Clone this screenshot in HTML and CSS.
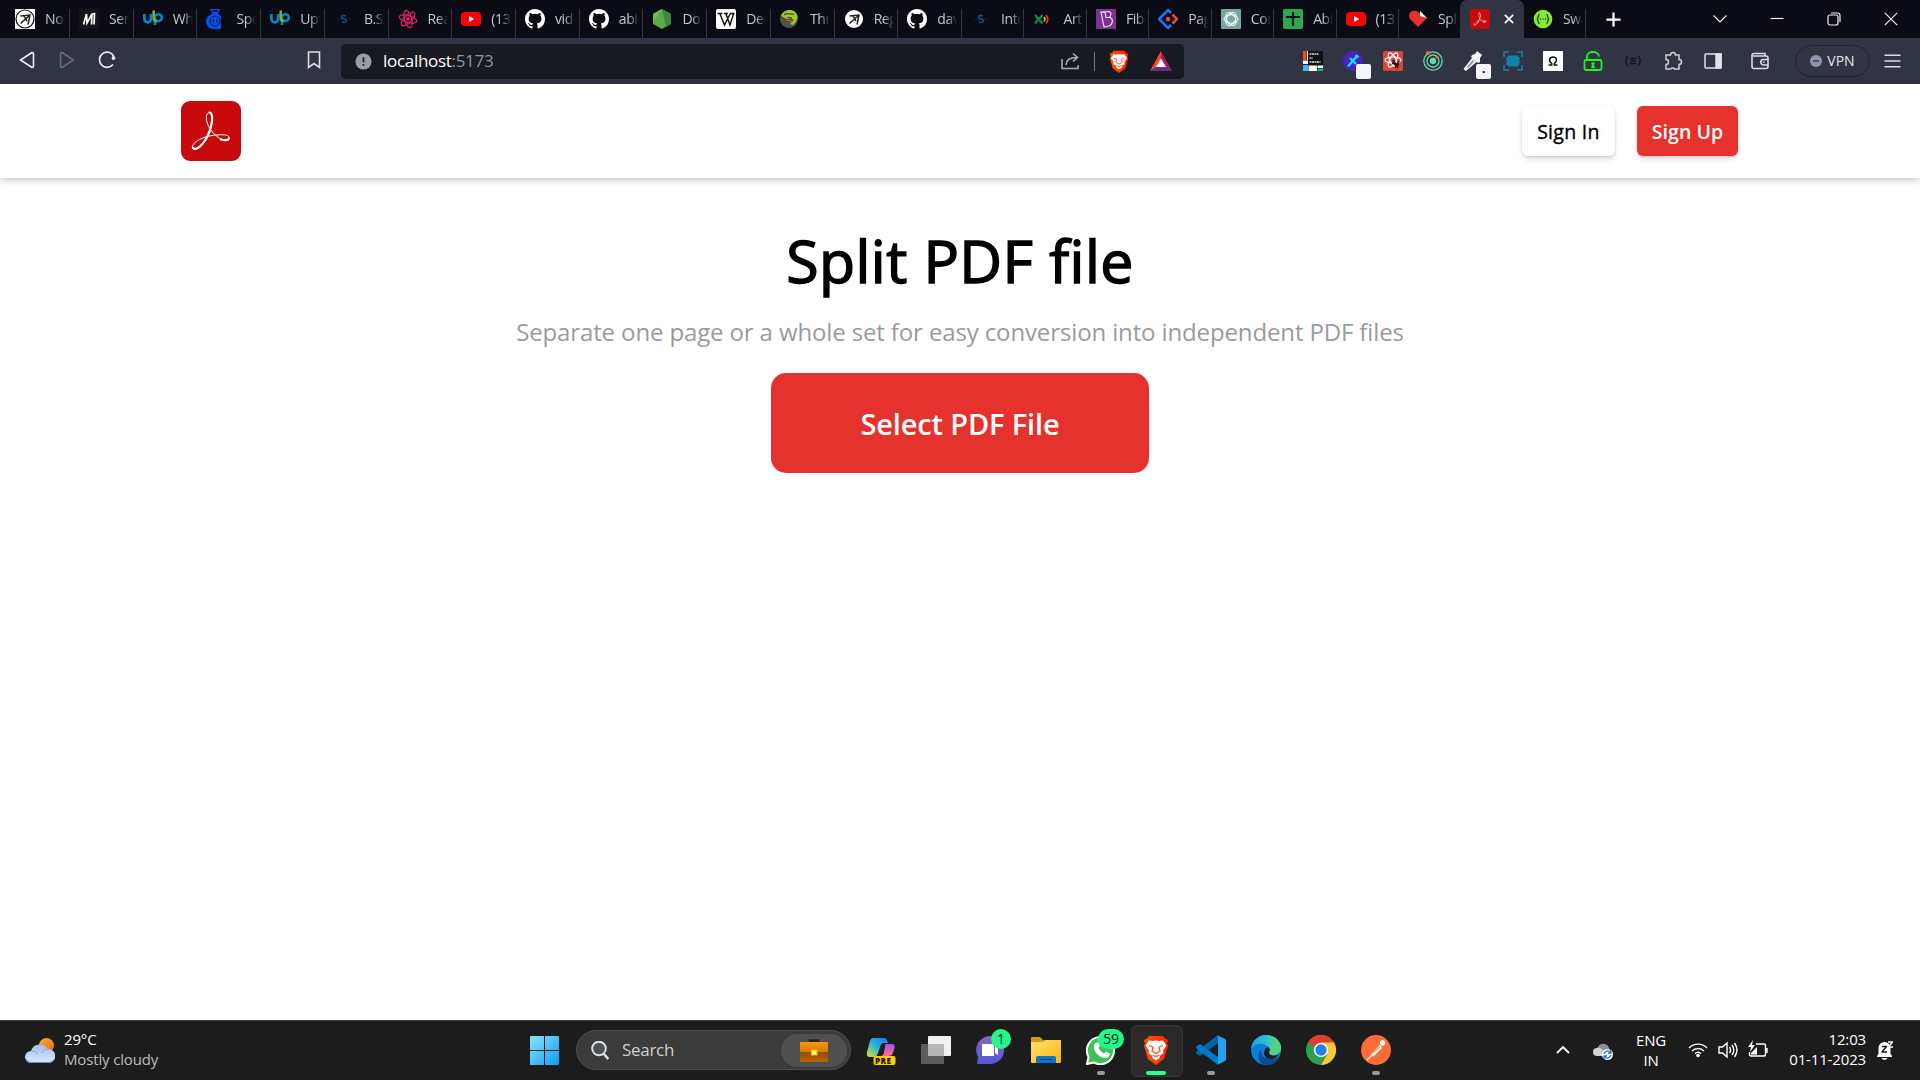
FILE: index.html
```html
<!DOCTYPE html>
<html lang="en">
<head>
<meta charset="utf-8">
<title>Split PDF file</title>
<link rel="stylesheet" href="styles.css">
</head>
<body>
<svg class="defs" aria-hidden="true">
  <defs>
    <linearGradient id="g-win" x1="0" y1="0" x2="1" y2="1"><stop offset="0" stop-color="#8be6ff"/><stop offset="1" stop-color="#0c9bf5"/></linearGradient>
    <linearGradient id="g-cloud" x1="0" y1="0" x2="0" y2="1"><stop offset="0" stop-color="#a4c0f0"/><stop offset="1" stop-color="#d9e9fc"/></linearGradient>
    <linearGradient id="g-sun" x1="0" y1="0" x2="1" y2="1"><stop offset="0" stop-color="#f9b52c"/><stop offset="1" stop-color="#ee5f12"/></linearGradient>
    <linearGradient id="g-case" x1="0" y1="0" x2="0" y2="1"><stop offset="0" stop-color="#f79a0c"/><stop offset=".48" stop-color="#d67a00"/><stop offset=".5" stop-color="#8f4c02"/><stop offset="1" stop-color="#b86400"/></linearGradient>
    <linearGradient id="g-cop1" x1="1" y1="0" x2="0" y2="1"><stop offset="0" stop-color="#1c6fe8"/><stop offset=".5" stop-color="#27b5df"/><stop offset="1" stop-color="#e9dc25"/></linearGradient>
    <linearGradient id="g-cop2" x1="0" y1="0" x2="0" y2="1"><stop offset="0" stop-color="#a84ff0"/><stop offset="1" stop-color="#ff6d86"/></linearGradient>
    <linearGradient id="g-chat" x1="0" y1="0" x2="0" y2="1"><stop offset="0" stop-color="#8a63b8"/><stop offset="1" stop-color="#5558d8"/></linearGradient>
    <linearGradient id="g-fold" x1="0" y1="0" x2="1" y2="1"><stop offset="0" stop-color="#ffdf76"/><stop offset="1" stop-color="#fcb90e"/></linearGradient>
    <linearGradient id="g-edge" x1="0" y1="0" x2="1" y2="0"><stop offset="0" stop-color="#249fe0"/><stop offset=".55" stop-color="#35c1cf"/><stop offset="1" stop-color="#68e04a"/></linearGradient>
    <linearGradient id="g-brave" x1="0" y1="0" x2="1" y2="0"><stop offset="0" stop-color="#ff5500"/><stop offset="1" stop-color="#ff2200"/></linearGradient>
  </defs>
  <symbol id="i-acrobat" viewBox="0 0 60 60"><rect width="60" height="60" rx="9" fill="#c80a0c"/><g fill="none" stroke="#fff" stroke-linecap="round" stroke-linejoin="round"><path stroke-width="1" d="M28.500 11.500c-4 0-4 7-1.500 12.500 2 5 6 9.500 11 13 4 2.500 9.500 2.500 10 0 .5-3-4-3.500-10-3.200-7 .3-14 1.700-19.500 4.700-5 2.500-8 6-7 8.500 1 2 4 1 6-1"/><path stroke-width="2.200" d="M28.500 11.500c3.500.5 3 8 1.500 14-2 8-6.500 16-11.500 20.500-2.500 2-5.500 2.500-6.500 1M40 38.500c4 1.200 7.500 1 8-1"/></g></symbol>
  <symbol id="i-github" viewBox="0 0 16 16"><path fill="#fff" d="M8 0C3.58 0 0 3.58 0 8c0 3.54 2.29 6.53 5.47 7.59.4.07.55-.17.55-.38v-1.49c-2.01.37-2.53-.49-2.69-.94-.09-.23-.48-.94-.82-1.13-.28-.15-.68-.52-.01-.53.63-.01 1.08.58 1.23.82.72 1.21 1.87.87 2.33.66.07-.52.28-.87.51-1.07-1.78-.2-3.64-.89-3.64-3.95 0-.87.31-1.59.82-2.15-.08-.2-.36-1.02.08-2.12 0 0 .67-.21 2.2.82a7.6 7.6 0 0 1 4 0c1.53-1.04 2.2-.82 2.2-.82.44 1.1.16 1.92.08 2.12.51.56.82 1.27.82 2.15 0 3.07-1.87 3.75-3.65 3.95.29.25.54.73.54 1.48v2.2c0 .21.15.46.55.38A8.01 8.01 0 0 0 16 8c0-4.42-3.58-8-8-8z"/></symbol>
  <symbol id="i-youtube" viewBox="0 0 20 20"><rect y="3" width="20" height="14" rx="4" fill="#f00"/><path d="M8 7l5.200 3-5.200 3z" fill="#fff"/></symbol>
  <symbol id="i-up" viewBox="0 0 20 20"><path d="M1.400 5v5a3.300 3.300 0 0 0 6.600 0V5" fill="none" stroke="#0a86c8" stroke-width="2.700"/><path d="M12 16V8.500a3.400 3.400 0 1 1 3 3.500h-2" fill="none" stroke="#0a86c8" stroke-width="2.600"/><path d="M10.700 1.500v7.500q.3 3 3.300 3" fill="none" stroke="#6bb345" stroke-width="2.600"/></symbol>
  <symbol id="i-dim" viewBox="0 0 20 20"><path d="M3 10h14" stroke="#15233f"/><path d="M12 7c-5-2-6 2-2 3s3 4-2 3" fill="none" stroke="#1e467c" stroke-width="1.600"/></symbol>
  <symbol id="i-expo" viewBox="0 0 20 20"><path d="M5.500 7l9.500-1-2 9.500M15 6l-9.500 8.500M9 7l3 5" fill="none" stroke="#222" stroke-width="1.500"/></symbol>
  <symbol id="i-brave" viewBox="0 0 26 30"><path fill="url(#g-brave)" d="M6 1h14l2 2.500L25 5l-1 4 1 2-4 13-8 6-8-6L1 11l1-2-1-4 3-1.500z"/><path fill="#fff" d="M6 5.500l4 .5 3-.5 3 .5 4-.5 3.500 5-3.500 5 .5 3-3 1.500-1 3-3.500 2.500L9.500 23l-1-3-3-1.500.5-3-3.500-5z"/><path fill="none" stroke="#ff4a10" stroke-width="1.200" d="M6 10.500l4 1.500-1 4 4 2.500 4-2.500-1-4 4-1.500M9.500 20.500h2M14.500 20.500h2M11.500 22l1.500-1 1.500 1"/></symbol>
</svg>

<header class="browser">
  <div class="tabs">
    <div class="tab first"><svg viewBox="0 0 20 20"><rect width="20" height="20" fill="#fff"/><circle cx="10" cy="10" r="9" fill="#fff" stroke="#111" stroke-width="1.200"/><use href="#i-expo"/></svg><span>Not</span></div>
    <div class="tab"><svg viewBox="0 0 20 20"><rect width="20" height="20" fill="#14141a"/><path d="M4.500 15.500l3-10.500.5 9L13 5l-.5 10.500M13 5l2.500-.500-.500 11" fill="none" stroke="#fff" stroke-width="1.700"/></svg><span>Sen</span></div>
    <div class="tab"><svg><use href="#i-up"/></svg><span>Wh</span></div>
    <div class="tab"><svg viewBox="0 0 20 20"><path d="M4 0h10l-1.500 3.500L12 5a8 8 0 0 1 3 2.500v12.500H9.500A7.500 7.500 0 0 1 6 5l.500-1.500H5.500z" fill="#0751f4"/><circle cx="9" cy="12" r="5" fill="none" stroke="#08113c"/><path d="M7.300 10.500v3M10.700 10.500v3M6 2h6" stroke="#08113c" stroke-width="1.300"/></svg><span>Spe</span></div>
    <div class="tab"><svg><use href="#i-up"/></svg><span>Upv</span></div>
    <div class="tab"><svg><use href="#i-dim"/></svg><span>B.S</span></div>
    <div class="tab"><svg viewBox="0 0 20 20" fill="none" stroke="#e0246c" stroke-width="1.200"><ellipse cx="10" cy="10" rx="9" ry="3.500" transform="rotate(15 10 10)"/><ellipse cx="10" cy="10" rx="9" ry="3.500" transform="rotate(75 10 10)"/><ellipse cx="10" cy="10" rx="9" ry="3.500" transform="rotate(135 10 10)"/><circle cx="10" cy="10" r="1.300" fill="#e0246c"/></svg><span>Rea</span></div>
    <div class="tab"><svg><use href="#i-youtube"/></svg><span>(13)</span></div>
    <div class="tab"><svg><use href="#i-github"/></svg><span>vide</span></div>
    <div class="tab"><svg><use href="#i-github"/></svg><span>abi</span></div>
    <div class="tab"><svg viewBox="0 0 20 20"><path d="M10 0l9 5v10l-9 5-9-5V5z" fill="#5aaa4c"/><path d="M10 0l9 5v10l-5 3z" fill="#3f873f"/><path d="M10 0L1 13V5z" fill="#77bb59"/></svg><span>Do</span></div>
    <div class="tab"><svg viewBox="0 0 20 20"><rect width="20" height="20" rx="2" fill="#fff"/><path d="M1.500 4.500h5M8 4.500h4M14 4.500h4.500M4 5l4.500 11L14 5M10 5l4 11 3.500-11" fill="none" stroke="#111" stroke-width="1.400"/></svg><span>Den</span></div>
    <div class="tab"><svg viewBox="0 0 20 20"><circle cx="9" cy="10" r="9" fill="#50524c"/><path d="M1 6c4-5 11-7 15-2 3 4 1 8-3 12l-3-1 4-4-3-2-4 1-4-2z" fill="#a5cc23"/><path d="M4 6c3-3 7 0 10-1M7 8l5 1" stroke="#454a2c" stroke-width="1.200" fill="none"/><path d="M7 11l5 1.500" stroke="#d4512e" stroke-width="1.500"/></svg><span>Thr</span></div>
    <div class="tab"><svg viewBox="0 0 20 20"><circle cx="10" cy="10" r="9" fill="#fff"/><use href="#i-expo"/></svg><span>Reg</span></div>
    <div class="tab"><svg><use href="#i-github"/></svg><span>dav</span></div>
    <div class="tab narrow"><svg><use href="#i-dim"/></svg><span>Inte</span></div>
    <div class="tab narrow"><svg viewBox="0 0 20 20" fill="none"><path d="M2 6l7.500 8.500M9.500 6L2 14.500" stroke="#128a48" stroke-width="2.200"/><path d="M11 8a3.500 3.500 0 0 1 0 4.500" stroke="#e4c52b" stroke-width="1.500"/><path d="M13 6a6 6 0 0 1 0 8.500" stroke="#df3434" stroke-width="1.700"/></svg><span>Arti</span></div>
    <div class="tab narrow"><svg viewBox="0 0 20 20"><rect width="20" height="20" fill="#7d3390"/><path d="M5 3l8-.500c3 1 2 5 0 6 5 0 4 7 0 8.500l-5 1L5 3l4 .5 1 5h3" fill="none" stroke="#e9dced" stroke-width="1.200"/></svg><span>Fibo</span></div>
    <div class="tab narrow"><svg viewBox="0 0 20 20" fill="none" stroke-width="2.500"><path d="M13 4l-3-3-9 9 9 9 3-3" stroke="#1677ff"/><path d="M14.500 5.500L19 10l-4.500 4.500" stroke="#f1424d"/><circle cx="10" cy="10" r="2.300" fill="#f1424d" stroke="none"/></svg><span>Pag</span></div>
    <div class="tab narrow"><svg viewBox="0 0 20 20"><rect width="20" height="20" rx="1" fill="#75a99c"/><g fill="none" stroke="#fff" stroke-width="1"><ellipse cx="10" cy="10" rx="7" ry="4.300"/><ellipse cx="10" cy="10" rx="7" ry="4.300" transform="rotate(60 10 10)"/><ellipse cx="10" cy="10" rx="7" ry="4.300" transform="rotate(120 10 10)"/></g></svg><span>Cor</span></div>
    <div class="tab narrow"><svg viewBox="0 0 20 20"><rect width="20" height="20" rx="2" fill="#2ca94f"/><path d="M10 3v14M3 8h14" stroke="#08120c" stroke-width="2.200"/></svg><span>Abi</span></div>
    <div class="tab narrow"><svg><use href="#i-youtube"/></svg><span>(13)</span></div>
    <div class="tab before-active"><svg viewBox="0 0 20 20"><path d="M10 18L2 10C-1 5 4-1 10 3l9 6z" fill="#e5322d"/><path d="M12 2l7 7-7-2z" fill="#fff"/></svg><span>Spl</span></div>
    <div class="tab active"><svg viewBox="0 0 60 60"><use href="#i-acrobat"/></svg><svg class="close" viewBox="0 0 10 10"><path d="M.8.8l8.400 8.400M9.200.8L.8 9.200" stroke="#fff" stroke-width="1.700"/></svg></div>
    <div class="tab last"><svg viewBox="0 0 20 20"><circle cx="10" cy="10" r="9.300" fill="#85ea2d"/><path d="M6.500 5.500c-2 0-.5 4-2.500 4.500 2 .5.500 4.500 2.500 4.500M13.500 5.500c2 0 .5 4 2.500 4.500-2 .5-.5 4.500-2.500 4.500M7 10h1M9.500 10h1M12 10h1" fill="none" stroke="#173647" stroke-width="1.300"/></svg><span>Swa</span></div>
    <svg class="new-tab" viewBox="0 0 16 16"><path d="M8 .5v15M.5 8h15" stroke="#fff" stroke-width="2.400"/></svg>
    <div class="window-buttons">
      <svg viewBox="0 0 14 14"><path d="M.5 3.500L7 10l6.500-6.500" /></svg>
      <svg viewBox="0 0 14 14"><path d="M.5 6.500h13"/></svg>
      <svg viewBox="0 0 14 14"><rect x="1" y="3" width="10" height="10" rx="2"/><path d="M4 1h6.500A2.500 2.500 0 0 1 13 3.500V10"/></svg>
      <svg viewBox="0 0 14 14"><path d="M.8.8l12.400 12.400M13.200.8L.8 13.200"/></svg>
    </div>
  </div>
  <div class="toolbar">
    <div class="nav">
      <svg viewBox="0 0 18 18"><path d="M14 1.500L2.500 9 14 16.500q1.500 0 1.500-1.500V3q0-1.500-1.500-1.500z"/></svg>
      <svg class="off" viewBox="0 0 18 18"><path d="M4 1.500L15.500 9 4 16.500q-1.500 0-1.500-1.500V3q0-1.500 1.500-1.500z"/></svg>
      <svg viewBox="0 0 18 18"><path d="M15.700 5A7.600 7.600 0 1 0 15 13.500"/><circle cx="15.500" cy="7" r="1.900" fill="#f0f0f4" stroke="none"/></svg>
    </div>
    <svg class="bookmark" viewBox="0 0 14 18"><path d="M1.500 1h11v15.500L7 12.500l-5.500 4z"/></svg>
    <div class="address">
      <svg class="info" viewBox="0 0 18 18"><circle cx="9" cy="9" r="8.500" fill="#9a9da8"/><path d="M9 4.500v5.300M9 11.700v1.800" stroke="#1b1d25" stroke-width="1.800"/></svg>
      <div class="url">localhost<span>:5173</span></div>
      <svg class="share" viewBox="0 0 18 18"><path d="M1 7v9.500h16V13M5 13c0-5 4-7.500 10.500-7.500M12 1.500l4.500 4-4.500 4"/></svg>
      <i class="divider"></i>
      <svg class="shield"><use href="#i-brave"/></svg>
      <svg class="bat" viewBox="0 0 22 20"><path d="M11 0L0 20l11-6z" fill="#ff4724"/><path d="M11 0l11 20-11-7z" fill="#9e1f63"/><path d="M0 20h22l-5-4H6z" fill="#662d91"/><path d="M11 7.500l5 8.500H6z" fill="#fff"/></svg>
    </div>
    <div class="extensions">
      <div><svg viewBox="0 0 20 20"><rect width="20" height="20" fill="#111"/><path fill="#fff" d="M0 9.500h5V13H0zM5.500 14.500h8.500V20H5.500zM14.500 14.500H20V17h-5.500z"/><path fill="#f24e1e" d="M0 0h3.500v9H0z"/><path fill="#fff" d="M4 0h1v9H4z"/><path fill="#39b6ff" d="M0 14h5v6H0z"/><path fill="#0fbd76" d="M14.500 17.500H20V20h-5.500z"/><path d="M6.500 3h9M6.500 7h3M6.500 11h11" stroke="#ddd" stroke-width="1.600" stroke-dasharray="2 .5"/></svg></div>
      <div><svg viewBox="0 0 20 20"><circle cx="10" cy="10" r="10" fill="#4a22c4"/><path d="M5 15.500L14 5M7 7l6 6M12.500 4l3 2.500" stroke="#15dfe2" stroke-width="2.400"/></svg><b class="badge"></b></div>
      <div><svg viewBox="0 0 20 20"><rect width="20" height="20" rx="1.500" fill="#d9453b"/><g fill="none" stroke="#fff" stroke-width="1.100"><ellipse cx="10" cy="9" rx="8" ry="3"/><ellipse cx="10" cy="9" rx="8" ry="3" transform="rotate(60 10 9)"/><ellipse cx="10" cy="9" rx="8" ry="3" transform="rotate(120 10 9)"/></g><path d="M10 9l5 8M16 10l-4 7M9 12l7 2" stroke="#33110e" stroke-width="2"/></svg></div>
      <div><svg viewBox="0 0 20 20" fill="none" stroke="#5fdca0" stroke-width="1.300"><circle cx="10" cy="10" r="9.200"/><circle cx="10" cy="10" r="6"/><circle cx="10" cy="10" r="2.500" fill="#5fdca0"/><circle cx="5" cy="2" r="2" fill="#ff6a2b" stroke="none"/><circle cx="14" cy="6" r="1.600" fill="#ff6a2b" stroke="none"/></svg></div>
      <div><svg viewBox="0 0 20 20"><path d="M3 20l-2.500-2L9 7l4.500 4zM9 4l3-1 2-3 5 4-2 3v4l-2 1-7-6z" fill="#fff"/><path d="M4.500 16.500l6-7" stroke="#999ba4" stroke-width="2"/></svg><b class="badge">.</b></div>
      <div><svg viewBox="0 0 20 20"><path d="M5 4.500h10v11H5zM3.500 6h13v8h-13z" fill="#1180aa"/><path d="M1 6V1h5M14 1h5v5M19 14v5h-5M6 19H1v-5" fill="none" stroke="#1180aa" stroke-width="1.600"/></svg></div>
      <div><svg viewBox="0 0 20 20"><rect width="20" height="20" fill="#fff"/><path d="M5.500 14h3.200v-1.500C5 10 6.500 6 10 6s5 4 1.300 6.500V14h3.200" fill="none" stroke="#111" stroke-width="1.500"/></svg></div>
      <div><svg viewBox="0 0 20 20" fill="none" stroke="#1cf51c" stroke-width="1.800"><rect x="1.500" y="9" width="17" height="10" rx="1.500"/><path d="M4 9V5.500C4 2 7 1 10 1s6 1.500 6 4.500"/><path d="M10 11.500v5M8.300 12.500h3.400M8.300 16h3.400"/></svg></div>
      <div><svg viewBox="0 0 20 20" fill="none" stroke="#14151c" stroke-width="1.400"><path d="M5 5c-2 0-1 5-3 5 2 0 1 5 3 5M15 5c2 0 1 5 3 5-2 0-1 5-3 5M7 7.500h6M7 10h6M7 12.500h6"/></svg></div>
      <div><svg viewBox="0 0 20 20" fill="none" stroke="#cfcfd5" stroke-width="1.500"><path d="M3 4h4.500a2.500 2.500 0 0 1 5 0H16v4.500a2.500 2.500 0 0 1 0 5V18h-4.500a2.500 2.500 0 0 0-4 0H3v-4.500a2.500 2.500 0 0 0 0-5z"/></svg></div>
      <div><svg viewBox="0 0 20 20" fill="none" stroke="#e2e2e7" stroke-width="1.500"><rect x="2" y="3" width="16" height="14" rx="1"/><path d="M13 3h5v14h-5z" fill="#e2e2e7"/></svg></div>
    </div>
    <svg class="wallet" viewBox="0 0 18 18"><path d="M2 4h13q2 0 2 2v8.500q0 2-2 2H3q-2 0-2-2V3.500q0-2 2-2h11V4M17 7.500h-4.500a2.500 2.500 0 0 0 0 5.500H17M12 10.200h1.500"/></svg>
    <div class="vpn"><svg viewBox="0 0 12 12"><circle cx="6" cy="6" r="6" fill="#9194ae"/><path d="M3 6h6" stroke="#31343f" stroke-width="1.400"/></svg><span>VPN</span></div>
    <svg class="menu" viewBox="0 0 18 14"><path d="M.5 1h17M.5 7h17M.5 13h17"/></svg>
  </div>
</header>

<main class="page">
  <nav class="site-nav">
    <svg class="logo"><use href="#i-acrobat"/></svg>
    <div class="auth">
      <button class="sign-in"><span>Sign In</span></button>
      <button class="sign-up"><span>Sign Up</span></button>
    </div>
  </nav>
  <section class="hero">
    <h1>Split PDF file</h1>
    <p>Separate one page or a whole set for easy conversion into independent PDF files</p>
    <button class="select"><span>Select PDF File</span></button>
  </section>
</main>

<footer class="taskbar">
  <div class="weather">
    <svg viewBox="0 0 30 25"><circle cx="21.500" cy="7.500" r="7.500" fill="url(#g-sun)"/><path d="M6 25a6 6 0 0 1 0-12 9 9 0 0 1 16.500-2A7 7 0 0 1 24 25z" fill="url(#g-cloud)"/><path d="M1 21q2 3.500 5 3.500h18q3 0 5-3" fill="none" stroke="#6d8cc4"/><path d="M7 13q4 0 6 3M17 15q1-4 6-4" fill="none" stroke="#87a7e2"/></svg>
    <div><div>29°C</div><div class="dim">Mostly cloudy</div></div>
  </div>
  <div class="center">
    <svg class="start" viewBox="0 0 29 29"><path fill="url(#g-win)" d="M1 0h13v14H0V1q0-1 1-1zM15 0h13q1 0 1 1v13H15zM0 15h14v14H1q-1 0-1-1zM15 15h14v13q0 1-1 1H15z"/></svg>
    <div class="search">
      <svg class="lens" viewBox="0 0 18 19"><circle cx="8" cy="7.500" r="6.800" fill="#505152" stroke="#e2e5e8" stroke-width="1.900"/><path d="M13 13l4.300 5" stroke="#e2e5e8" stroke-width="2.500"/></svg>
      <span>Search</span>
      <div class="promo"><svg viewBox="0 0 28 23"><path d="M10 4V1.500h8V4" fill="none" stroke="#222" stroke-width="2.500"/><rect y="3" width="28" height="20" rx="1" fill="url(#g-case)"/><rect x="11.500" y="11" width="5.500" height="5" fill="#fff09b" stroke="#e8b905" stroke-width="1.200"/></svg></div>
    </div>
    <div class="apps">
      <div class="app"><svg viewBox="0 0 30 30"><path d="M7 3h11q3 0 4 5h-4q-3 0-4 4l-2 6q-1 4-5 4H4q-4 0-3-5L4 6q1-3 3-3z" fill="url(#g-cop1)"/><path d="M20 9h6q3 0 2.500 4l-2 6q-1 2-4 2h-8q3 0 3.500-4l1-5q0-3 1-3z" fill="url(#g-cop2)"/><rect x="7.500" y="21" width="22" height="9" rx="2" fill="#ffcb00"/></svg><em>PRE</em></div>
      <div class="app"><svg viewBox="0 0 30 30"><rect y="9" width="23" height="20" rx="1" fill="#5c5c5c"/><rect x="7" y="1" width="23" height="20" rx="1" fill="#f0f0f0"/><path d="M7 9h16v12H7z" fill="#b7b7b7"/></svg></div>
      <div class="app"><svg viewBox="0 0 30 30"><path d="M1 29l1-7A14 14 0 1 1 15 29z" fill="url(#g-chat)"/><path d="M6 9h12v12H6zM19 12l3-2v10l-3-2z" fill="#fff"/></svg><b class="count">1</b></div>
      <div class="app"><svg viewBox="0 0 30 30"><path d="M0 3q0-1 1-1h8l3 3h16v6H0z" fill="#d99b0b"/><path d="M0 7h12l3-2h15v22q0 1-1 1H1q-1 0-1-1z" fill="url(#g-fold)"/><path d="M5 28v-5q0-2 2-2h16q2 0 2 2v5z" fill="#0f73c8"/><path d="M9 24.500h12" stroke="#073f7c"/></svg></div>
      <div class="app"><svg viewBox="0 0 30 30"><path d="M1 29l1.500-7A13.600 13.600 0 1 1 8 27.500z" fill="#3fc158" stroke="#fff" stroke-width="2"/><path d="M9 8l3-1 2 4-1.500 2q2 4 5.500 5.500l2-2 4 2q-1 5-5 4.500C12 22 7 16 8 10z" fill="#fff"/></svg><b class="count wide">59</b><i class="dot"></i></div>
      <div class="app current"><svg><use href="#i-brave"/></svg><i class="dot"></i></div>
      <div class="app"><svg viewBox="0 0 30 30"><path d="M22 0v8L4 21l-3-2q-2-1 0-3z" fill="#0065a9"/><path d="M22 30v-8L4 9l-3 2q-2 1 0 3z" fill="#007acc"/><path d="M21 0l8 4q1 .5 1 1.500v19q0 1-1 1.500l-8 4q1-.5 1-2V2q0-1-1-2z" fill="#27a0f2"/></svg><i class="dot"></i></div>
      <div class="app"><svg viewBox="0 0 30 30"><circle cx="15" cy="15" r="15" fill="#087fd5"/><path d="M10 15c0 8 8 12 17 9-3 5-9 7-14 5.500C6 27 6 18 10 15z" fill="#0c4b93"/><path d="M0 14C1 5 8 0 15 0c9 0 15 6 15 13 0 6-6 8-11 6-3-1 1-2 0-5C16 8 5 6 0 14z" fill="url(#g-edge)"/><path d="M19 14c0 3-3 3 0 5 2 2 6 2 9 0-3 5-9 7-13 3-4-4-1-9 2-10z" fill="#1b1f22"/><path d="M15 22q5 4 13 0l-2 3q-9 4-14-1z" fill="#0c4b93"/><path d="M20 20c5 1 10-2 10-7 0-2-.5-3-1-4.500-3 2-8 2-10 4l.5 2.500c0 2-2 4 .5 5z" fill="#50d282"/></svg></div>
      <div class="app"><svg viewBox="0 0 30 30"><circle cx="15" cy="15" r="15" fill="#2e9f4f"/><path d="M15 15L2 7.500A15 15 0 0 1 28 7.500z" fill="#e23e30"/><path d="M15 7.500h13A15 15 0 0 1 15 30l6.500-11z" fill="#fcc934"/><circle cx="15" cy="15" r="7.200" fill="#fff"/><circle cx="15" cy="15" r="5.700" fill="#2b7cf0"/></svg></div>
      <div class="app"><svg viewBox="0 0 30 30"><circle cx="15" cy="15" r="15" fill="#ff6c37"/><circle cx="21.500" cy="8" r="2.700" fill="#fff"/><path d="M19 10l2 3-8 8-4 .5 2-3z" fill="#fff"/><path d="M6 25l5-5M12 19l7-7" stroke="#fff" stroke-width="1.200"/><path d="M12 18l7-6" stroke="#ff6c37" stroke-width=".800"/></svg><i class="dot"></i></div>
    </div>
  </div>
  <div class="tray">
    <svg class="up" viewBox="0 0 14 10"><path d="M1 8l6-6 6 6"/></svg>
    <svg class="sync" viewBox="0 0 20 18"><path d="M6 13a5 5 0 0 1-1-9 6 6 0 0 1 11 1l1 8z" fill="#8d8f91"/><path d="M4 13a4 4 0 0 1 0-8q4-1 6 3v5z" fill="#d0d2d4"/><circle cx="14.500" cy="11.500" r="5.500" fill="#fff"/><path d="M11 11a3.600 3.600 0 0 1 6.500-1.500M18 12a3.600 3.600 0 0 1-6.500 1.500M18 7v3h-3M11 16v-3h3" fill="none" stroke="#1b78d0" stroke-width="1.300"/></svg>
    <div class="lang">ENG<br>IN</div>
    <svg class="wifi" viewBox="0 0 20 16"><path d="M1 6a12.500 12.500 0 0 1 18 0M4 9a8.500 8.500 0 0 1 12 0M7 11.500a4.500 4.500 0 0 1 6 0"/><circle cx="10" cy="13.500" r="1.800" fill="#fff" stroke="none"/></svg>
    <svg class="sound" viewBox="0 0 20 18"><path d="M1 6h3.500L9 2v14l-4.500-4H1zM11.500 6q2 3 0 6M14 4q3.500 5 0 10M16.500 2q5 7 0 14"/></svg>
    <svg class="battery" viewBox="0 0 20 18"><path d="M8 4h8q1.500 0 1.500 1.500v9Q17.500 16 16 16H3q-1.500 0-1.500-1.500V12M19 8v5"/><path d="M3 14.500V13l6-6v7.500zM5 0L0 7h3l-1 5 5-7H4z" fill="#fff" stroke="none"/></svg>
    <div class="clock">12:03<br>01-11-2023</div>
    <svg class="bell" viewBox="0 0 18 19"><path d="M1 15l1.500-2V7a6 6 0 0 1 12 0v6l1.500 2v1H1zM5.500 17h6q-1 2-3 2t-3-2z" fill="#fff"/><path d="M6 5.500h4.500L6 11h5" fill="none" stroke="#1c1c1c" stroke-width="1.500"/><path d="M12 1h4.500L12.500 6H17" fill="none" stroke="#fff" stroke-width="1.300"/></svg>
  </div>
</footer>
</body>
</html>
```
FILE: styles.css
```css
* { box-sizing: border-box; }
body {
  margin: 0;
  width: 1920px;
  height: 1080px;
  display: flex;
  flex-direction: column;
  overflow: hidden;
  background: #fff;
  font-family: "Open Sans", "Noto Sans", sans-serif;
}
svg { display: block; flex: none; }
button { border: 0; padding: 0; font-family: inherit; display: flex; align-items: center; justify-content: center; }
.defs { position: absolute; width: 0; height: 0; }

/* tab strip */
.browser { height: 84px; flex: none; }
.tabs { height: 38px; display: flex; background: #0b0b16; padding-left: 6px; }
.tab {
  flex: none;
  width: 63.720px;
  height: 38px;
  padding: 9px 0 0 9px;
  display: flex;
  gap: 10px;
  background: linear-gradient(#35363a, #35363a) right bottom / 1px 29px no-repeat;
}
.tab svg { width: 20px; height: 20px; }
.tab span {
  width: 20px;
  height: 20px;
  overflow: hidden;
  white-space: nowrap;
  font-size: 14px;
  letter-spacing: -.400px;
  line-height: 19px;
  color: #c6c7cc;
  mask-image: linear-gradient(90deg, #000 50%, transparent);
}
.tab.first { width: 64px; }
.tab.narrow { width: 62.430px; }
.tab.before-active { width: 61px; background: none; }
.tab.active { width: 64px; padding-left: 10px; gap: 14px; background: #313443; border-radius: 7px 7px 0 0; }
.tab.active .close { width: 10px; height: 10px; margin-top: 5px; }
.tab.last { width: 62px; }
.new-tab { width: 15px; height: 15px; margin: 12px 0 0 20px; }
.window-buttons { margin-left: auto; padding: 12px 22px 0 0; display: flex; gap: 43px; }
.window-buttons svg { width: 14px; height: 14px; fill: none; stroke: #f0f0f0; stroke-width: 1.2; }

/* toolbar */
.toolbar { height: 46px; display: flex; align-items: center; background: #313443; padding-left: 18px; }
.toolbar > svg, .nav svg, .share { fill: none; stroke: #dcdce2; stroke-width: 1.6; }
.nav { display: flex; gap: 22px; margin-top: -2px; width: 289px; }
.nav svg { width: 18px; height: 18px; stroke: #f0f0f4; }
.nav .off { stroke: #686b79; }
.toolbar .bookmark { width: 14px; height: 18px; margin-right: 20px; margin-top: -2px; }
.address { width: 843px; height: 35px; border-radius: 5px; background: #171a21; display: flex; align-items: center; padding-left: 14px; }
.info { width: 17px; height: 17px; }
.url { margin-left: 11px; width: 678px; color: #fff; font-size: 17px; letter-spacing: -.300px; line-height: 30px; }
.url span { color: #92959d; }
.share { width: 18px; height: 18px; stroke: #a9abb0; }
.divider { width: 1px; height: 19px; background: #74767d; margin: 0 14px 0 15px; }
.shield { width: 20px; height: 23px; }
.bat { width: 22px; height: 20px; margin-left: 21px; }
.extensions { margin: -1px 0 0 109px; display: grid; grid-template-columns: repeat(11, 40px); }
.extensions div { position: relative; height: 28px; display: grid; place-items: center; }
.extensions svg { width: 20px; height: 20px; }
.badge { position: absolute; left: 23px; top: 17px; width: 15px; height: 15px; border-radius: 2px; background: #f5f5fa; color: #111; font-size: 13px; line-height: 9px; text-align: center; }
.toolbar .wallet { width: 18px; height: 18px; margin-left: 18px; margin-top: -1px; }
.vpn { width: 75px; height: 32px; margin: -1px 0 0 26px; border: 1px solid #1f222d; border-radius: 16px; display: flex; align-items: center; justify-content: center; gap: 5px; color: #e8e8ed; font-size: 14px; }
.vpn span { margin-top: -1px; }
.vpn svg { width: 12px; height: 12px; }
.toolbar .menu { width: 17px; height: 14px; margin-left: 14px; }

/* page */
.page { flex: 1; }
.site-nav { height: 94px; display: flex; align-items: center; justify-content: space-between; padding: 0 182px 0 181px; box-shadow: 0 1px 8px rgba(0, 0, 0, .280); }
.logo { width: 60px; height: 60px; }
.auth { display: flex; gap: 22px; }
.auth button { height: 50px; border-radius: 6px; font-size: 19.500px; box-shadow: 0 4px 6px -1px rgba(0, 0, 0, .120), 0 1px 3px rgba(0, 0, 0, .120); }
.auth .sign-in { width: 93px; background: #fff; color: #000; -webkit-text-stroke: .350px #000; letter-spacing: .300px; }
.auth .sign-up { width: 101px; background: #e5322d; color: #fff; font-weight: 600; letter-spacing: .100px; }
.hero { display: flex; flex-direction: column; align-items: center; padding-top: 47px; }
h1 { margin: 0; height: 70px; font-size: 59px; line-height: 70px; font-weight: 400; letter-spacing: .450px; -webkit-text-stroke: 1.500px #000; white-space: nowrap; }
.hero p { margin: 17px 0 0; height: 40px; font-size: 24px; line-height: 40px; letter-spacing: -.130px; color: #9a9a9f; white-space: nowrap; }
.select { margin-top: 21px; width: 378px; height: 100px; border-radius: 15px; background: #e5322d; color: #fff; font-size: 29px; font-weight: 600; letter-spacing: -.150px; }

/* taskbar */
.taskbar { height: 60px; flex: none; display: grid; grid-template-columns: 530px 873px 1fr; background: #1c1c1c; border-top: 1px solid #414344; color: #fff; font-size: 15px; line-height: 20px; letter-spacing: -.150px; }
.weather { display: flex; gap: 9px; padding: 8px 0 0 25px; }
.weather svg { width: 30px; height: 25px; margin-top: 9px; }
.dim { color: #bdbdbd; }
.center { display: flex; }
.start { width: 29px; height: 29px; margin: 15px 17px 0 0; }
.search { width: 275px; height: 40px; margin-top: 9px; border: 1px solid #505050; border-radius: 20px; background: #3b3b3b; display: flex; align-items: center; padding: 0 3px 0 14px; font-size: 17px; letter-spacing: -.300px; color: #d0d0d0; }
.lens { width: 18px; height: 19px; margin-right: 13px; }
.promo { width: 66px; height: 33px; margin-left: auto; border-radius: 17px; background: #505050; display: grid; place-items: center; }
.promo svg { width: 28px; height: 23px; }
.apps { display: grid; grid-template-columns: repeat(10, 55px); margin-left: 2px; }
.app { position: relative; display: grid; justify-content: center; padding-top: 14px; }
.app svg { width: 30px; height: 30px; }
.app em { position: absolute; left: 22px; top: 35px; font: 800 8px/9px "Open Sans", sans-serif; letter-spacing: .5px; color: #111; }
.current::before { content: ""; position: absolute; left: 3px; top: 4px; width: 50px; height: 50px; border: 1px solid #363636; border-radius: 6px; background: #2a2a2a; }
.current svg { position: relative; }
.dot { position: absolute; left: 24px; bottom: 5px; width: 8px; height: 4px; border-radius: 2px; background: #9a9a9a; }
.current .dot { left: 18px; width: 20px; background: #2bff8c; }
.count { position: absolute; left: 28px; top: 8px; width: 20px; height: 20px; border-radius: 10px; background: #23f889; color: #111; font-size: 14px; line-height: 20px; font-weight: 400; text-align: center; }
.count.wide { left: 25px; width: 26px; }
.tray { display: flex; align-items: center; padding-left: 153px; }
.tray svg { fill: none; stroke: #fff; stroke-width: 1.4; }
.tray .up { width: 14px; height: 10px; stroke-width: 1.800; margin-top: -1px; }
.sync { width: 20px; height: 18px; margin-left: 23px; margin-top: 2px; }
.sync *, .bell * { stroke-linejoin: round; }
.tray .sync, .tray .bell { stroke: none; }
.lang { width: 40px; margin: -2px 0 0 18px; text-align: center; }
.wifi { width: 20px; height: 16px; margin: -2px 0 0 17px; }
.sound { width: 20px; height: 18px; margin: -2px 0 0 10px; }
.battery { width: 20px; height: 18px; margin: -3px 0 0 10px; }
.clock { width: 88px; margin: -3px 0 0 10px; text-align: right; white-space: nowrap; }
.bell { width: 18px; height: 19px; margin: -1px 0 0 10px; }
```
